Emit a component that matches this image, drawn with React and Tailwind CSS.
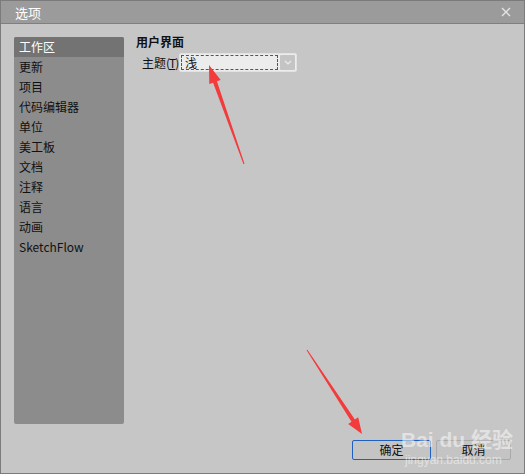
import React from 'react';

const items = ['工作区', '更新', '项目', '代码编辑器', '单位', '美工板', '文档', '注释', '语言', '动画', 'SketchFlow'];

function Arrows() {
    return (
        <svg className="absolute left-0 top-0 pointer-events-none" width="525" height="474">
            <polygon fill="#f33b3b" points="243.5,162.8 215.9,80.3 219.7,79 208,64 208.3,83 212.1,81.7 242.5,163.2" />
            <polygon fill="#f33b3b" points="306.4,348.7 353.9,418.5 357.2,416.3 361,433 347.2,422.9 350.5,420.7 305.6,349.3" />
        </svg>
    );
}

export default function App() {
    return (
        <div
            className="relative w-[525px] h-[474px] flex flex-col bg-[#c6c6c6] border border-[#7b7b7b] text-[12px] text-[#111]"
            style={{ fontFamily: '"Noto Sans CJK SC", "Noto Sans", sans-serif' }}
        >
            {/* title bar */}
            <div className="h-[23px] flex items-center justify-between bg-[#9b9b9b] border-b border-[#7f7f7f] pl-[14px] pr-[13px]">
                <span className="text-white text-[13px] leading-none">选项</span>
                <svg width="10" height="10" viewBox="0 0 10 10">
                    <path d="M1 1 L9 9 M9 1 L1 9" stroke="#e4e4e4" strokeWidth="1.4" />
                </svg>
            </div>

            <div className="flex-1 flex pl-[13px] pr-[13px] pt-[13px]">
                {/* category list */}
                <div className="w-[110px] h-[387px] bg-[#8c8c8c] rounded-[2px] flex flex-col">
                    {items.map((it, i) => (
                        <div
                            key={it}
                            className={
                                'h-[20px] flex items-center pl-[5px] leading-none ' +
                                (i === 0 ? 'bg-[#737373] text-white rounded-t-[2px]' : 'text-[#111]')
                            }
                        >
                            {it}
                        </div>
                    ))}
                </div>

                {/* settings */}
                <div className="flex-1 pl-[12px] -mt-[3px]">
                    <div className="h-[16px] flex items-center font-bold leading-none">用户界面</div>
                    <div className="flex items-center mt-[3px] pl-[6px] h-[19px]">
                        <span className="w-[37px] leading-none whitespace-nowrap">
                            主题<span className="tracking-[-1px]">(<u>T</u>)</span>
                        </span>
                        <div className="w-[118px] h-[19px] flex rounded-[2px] border border-[#e2e2e2] bg-[#ececec]">
                            <div className="flex-1 m-[1px] border border-dashed border-[#555] flex items-center pl-[3px] leading-none">浅</div>
                            <div className="w-[17px] h-full rounded-[2px] border border-[#ededed] bg-[#c4c4c4] flex items-center justify-center">
                                <svg width="8" height="5" viewBox="0 0 8 5">
                                    <path d="M1 1 L4 4 L7 1" stroke="#ececec" strokeWidth="1.2" fill="none" />
                                </svg>
                            </div>
                        </div>
                    </div>
                </div>
            </div>

            {/* buttons */}
            <div className="flex justify-end gap-[5px] pr-[13px] pt-[4px] pb-[13px]">
                <button className="w-[79px] h-[20px] rounded-[2px] border border-[#1f5fbf] bg-[#c4c4c4] leading-none text-[12px]">确定</button>
                <button className="w-[75px] h-[20px] rounded-[2px] border border-[#a9a9a9] bg-[#c4c4c4] leading-none text-[12px]">取消</button>
            </div>

            <Arrows />

            {/* watermark */}
            <div className="absolute left-[400px] top-[428px] pointer-events-none text-white/50 leading-none">
                <div className="text-[21px] font-bold" style={{ fontFamily: '"Liberation Sans", "Noto Sans CJK SC", sans-serif' }}>Bai du 经验</div>
                <div className="text-[12px] mt-[4px] ml-[4px]" style={{ fontFamily: '"Liberation Sans", sans-serif' }}>jingyan.baidu.com</div>
            </div>
        </div>
    );
}
